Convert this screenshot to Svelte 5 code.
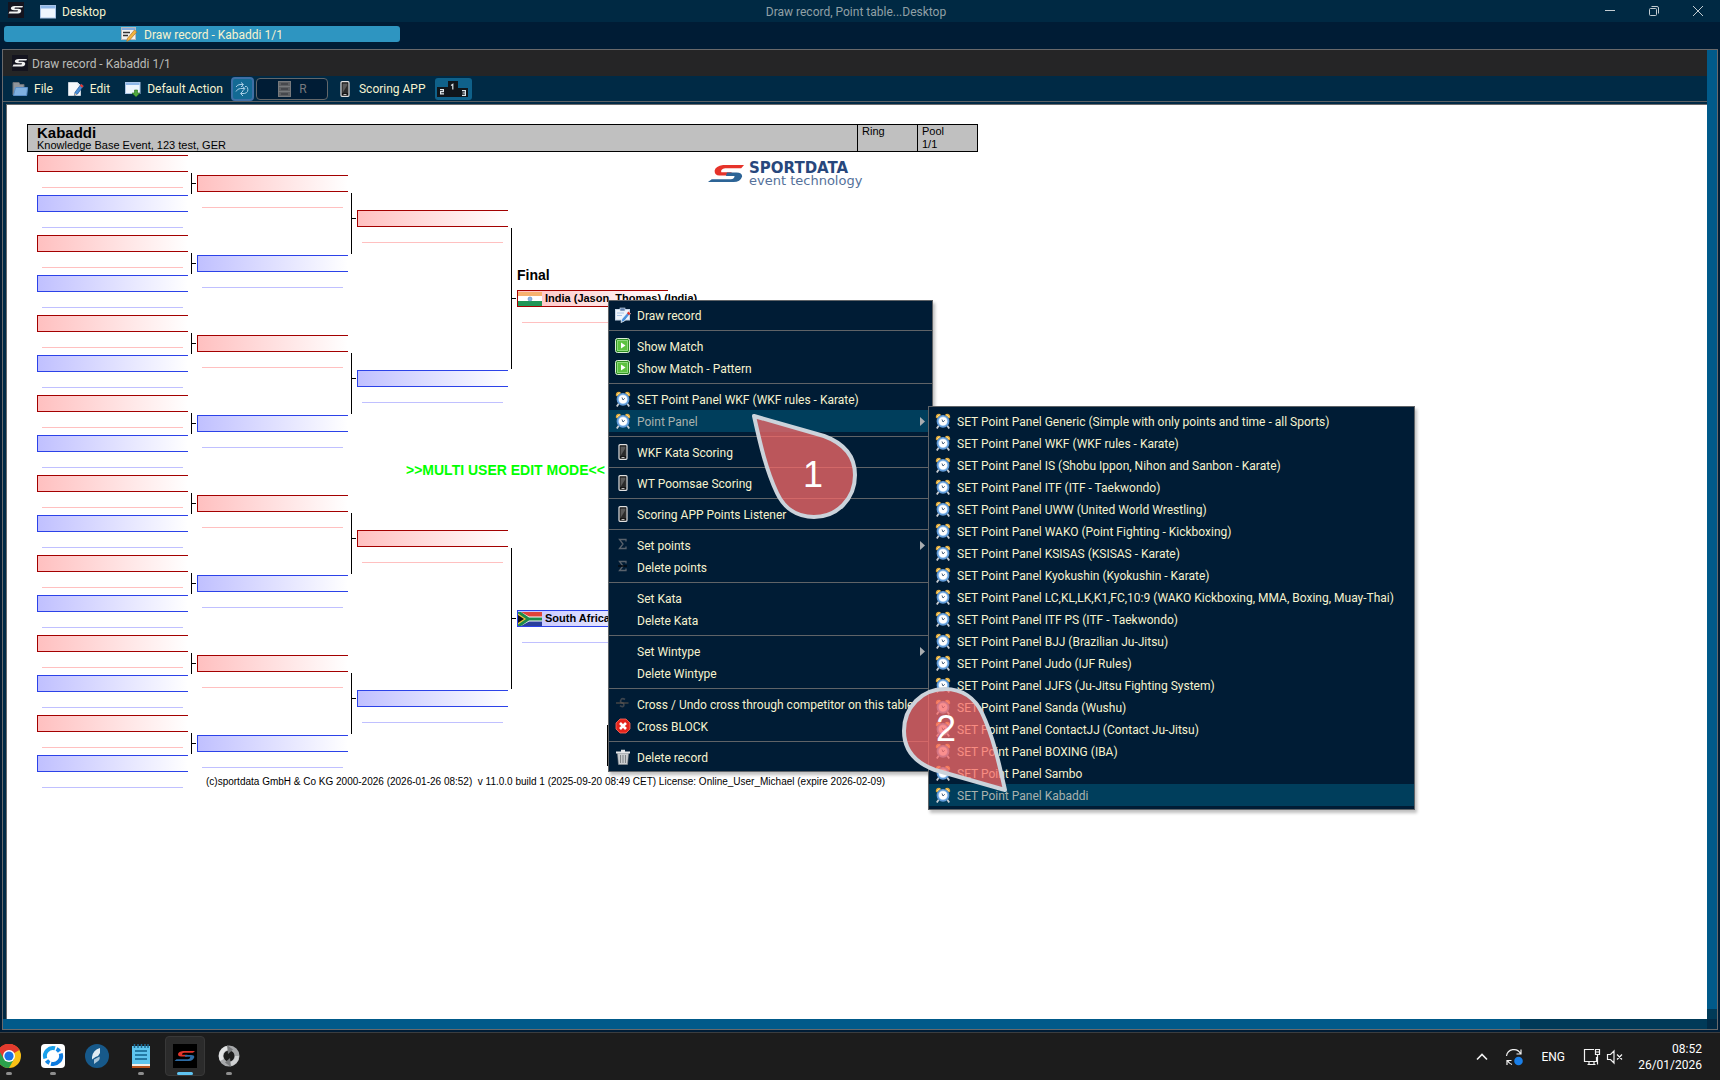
<script>
  const rounds = [
    { name: 'r1', pairs: [0, 1, 2, 3, 4, 5, 6, 7] },
    { name: 'r2', pairs: [0, 1, 2, 3] },
    { name: 'r3', pairs: [0, 1] }
  ];

  const groups = [
    [{ label: 'Draw record', icon: 'record' }],
    [{ label: 'Show Match', icon: 'play' }, { label: 'Show Match - Pattern', icon: 'play' }],
    [
      { label: 'SET Point Panel WKF (WKF rules - Karate)', icon: 'clock' },
      { label: 'Point Panel', icon: 'clock', sub: true, active: true }
    ],
    [{ label: 'WKF Kata Scoring', icon: 'phone' }],
    [{ label: 'WT Poomsae Scoring', icon: 'phone' }],
    [{ label: 'Scoring APP Points Listener', icon: 'phone' }],
    [{ label: 'Set points', icon: 'sigma', sub: true }, { label: 'Delete points', icon: 'sigmaCut' }],
    [{ label: 'Set Kata' }, { label: 'Delete Kata' }],
    [{ label: 'Set Wintype', sub: true }, { label: 'Delete Wintype' }],
    [
      { label: 'Cross / Undo cross through competitor on this table', icon: 'strike' },
      { label: 'Cross BLOCK', icon: 'block' }
    ],
    [{ label: 'Delete record', icon: 'trash' }]
  ];

  const panels = [
    'Generic (Simple with only points and time - all Sports)',
    'WKF (WKF rules - Karate)',
    'IS (Shobu Ippon, Nihon and Sanbon - Karate)',
    'ITF (ITF - Taekwondo)',
    'UWW (United World Wrestling)',
    'WAKO (Point Fighting - Kickboxing)',
    'KSISAS (KSISAS - Karate)',
    'Kyokushin (Kyokushin - Karate)',
    'LC,KL,LK,K1,FC,10:9 (WAKO Kickboxing, MMA, Boxing, Muay-Thai)',
    'ITF PS (ITF - Taekwondo)',
    'BJJ (Brazilian Ju-Jitsu)',
    'Judo (IJF Rules)',
    'JJFS (Ju-Jitsu Fighting System)',
    'Sanda (Wushu)',
    'ContactJJ (Contact Ju-Jitsu)',
    'BOXING (IBA)',
    'Sambo',
    'Kabaddi'
  ];
</script>

{#snippet icon(name)}
  <svg class="icon" viewBox="0 0 16 16" aria-hidden="true">
    {#if name === 'app'}
      <rect width="16" height="16" fill="#14141f" />
      <path d="M15 4H6.500Q3 4.200 2.800 6.500Q3 8.300 6 8.300h4l-.5 1.200H1.500l-1 2h9.500q3-.3 3.300-2.800Q13.200 7 10.500 6.800H6.500l.4-1.300h7.400z" fill="#f2f2f2" />
    {:else if name === 'window'}
      <rect x=".5" y="1.500" width="15" height="12.500" fill="#eef5fd" stroke="#a9c4e6" />
      <rect x="1" y="2" width="14" height="2.500" fill="#8fb7e8" />
    {:else if name === 'form'}
      <rect x=".5" y="1.500" width="14" height="12" fill="#f3f3f0" stroke="#b9b9b9" />
      <rect x="1" y="2" width="13" height="2" fill="#86ade0" />
      <path d="M2 6.500h7M2 9.500h5" stroke="#333" stroke-width="1.500" />
      <path d="M13.500 4l2.200 2-7 8-3 1.500.8-3.200z" fill="#f3b63f" stroke="#a9712a" stroke-width=".7" />
    {:else if name === 'folder'}
      <path d="M1 14V1.500h6l1 2h4v3h2" fill="#8f949a" stroke="#6b7177" />
      <path d="M3.500 6.500h12l-.8 8H1.500z" fill="#7fb0e0" stroke="#5a8fc8" />
    {:else if name === 'edit'}
      <path d="M.5 1.500h9l3 3v10h-12z" fill="#f7f9fb" stroke="#c9d3dc" />
      <path d="M9.500 1.500v3h3" fill="#dbe5ef" />
      <path d="M13.200 3l2.300 2-6 8-3.200 1.800.8-3.600z" fill="#4a90d9" stroke="#1c4f8f" stroke-width=".7" />
      <path d="M13.200 3l2.300 2-1.300 1.700-2.400-2z" fill="#e4372c" />
      <path d="M6.300 14.800l.7-2.600 1.800 1.300z" fill="#e9c79a" />
    {:else if name === 'default'}
      <rect x=".5" y="1.500" width="14.500" height="11" fill="#eef5fd" stroke="#a9c4e6" />
      <rect x="1" y="2" width="13.500" height="2" fill="#8fb7e8" />
      <path d="M9.500 9h3v3h2.500l-4 4-4-4h2.500z" fill="#4fa83e" stroke="#276b1d" stroke-width=".6" />
    {:else if name === 'phone'}
      <rect x="4" y=".7" width="8" height="14.600" rx="1" fill="#151515" stroke="#e0e0e0" stroke-width="1.200" />
      <rect x="5.500" y="2.500" width="5" height="9.500" fill="#5a5a5a" />
      <path d="M5.500 12L10.500 4v8z" fill="#2a2a2a" />
      <path d="M6.500 13.500h3" stroke="#bbb" />
    {:else if name === 'server'}
      <g fill="#5d5f62" stroke="#77797c"><rect x="1.500" y=".5" width="12" height="5" /><rect x="1.500" y="5.500" width="12" height="5" /><rect x="1.500" y="10.500" width="12" height="5" /></g>
      <path d="M4 3h7M4 8h7M4 13h7" stroke="#303338" />
    {:else if name === 'sync'}
      <g fill="none" stroke="#a9cfe6" stroke-width="1">
        <path d="M2 6q1.500-2.500 4-2.500h3M7 1.500l2.500 2L7 6" />
        <path d="M2 10.500q1.500-3 4.500-3h4M8.500 5.500L11 7.500 8.500 10" />
        <path d="M13.500 6.500q1.500 5-3 6H7M9 10l-2.500 2.500L9 15M11 5.500q2-.5 2.500 1" />
      </g>
    {:else if name === 'record'}
      <rect x=".5" y="2.500" width="14" height="10.500" fill="#eef5fb" stroke="#c5d6e8" />
      <rect x="5" y="1" width="5" height="3" fill="#5d7da8" stroke="#d8e4f0" stroke-width=".6" />
      <path d="M2 6h7M2 8.500h5" stroke="#a9c6e6" />
      <path d="M13.500 4.500l2 2-6 7.500-3.500 1.500.8-3.500z" fill="#4a90d9" stroke="#fff" stroke-width=".7" />
      <path d="M13.500 4.500l2 2-1.400 1.700-2.200-2z" fill="#e4372c" />
    {:else if name === 'play'}
      <rect x=".5" y=".5" width="14" height="14" rx="2" fill="#2f8f22" stroke="#d9efd4" />
      <rect x="2.500" y="2.500" width="10" height="10" fill="#5cc23f" stroke="#8ed97c" />
      <path d="M6 4.500L10.500 7.500 6 10.500z" fill="#fff" />
    {:else if name === 'clock'}
      <path d="M3.800 12.500L1.800 15.500M12.200 12.500l2 3" stroke="#c9cdd2" stroke-width="1.800" />
      <path d="M.8 4.500Q.6 1 4 .8q2 .2 2 1.400L2 5.500zM15.200 4.500Q15.400 1 12 .8q-2 .2-2 1.400L14 5.500z" fill="#e2aa3a" />
      <path d="M2 3.800l2.500-2M14 3.800l-2.500-2" stroke="#ffe08a" />
      <circle cx="8" cy="8.300" r="5.600" fill="#b5d6f5" stroke="#5f9ad8" stroke-width="1.600" />
      <circle cx="8" cy="8.300" r="4" fill="#fff" />
      <path d="M7 6.500L8 9l1.800-1.700" fill="none" stroke="#4c6480" />
    {:else if name === 'sigma' || name === 'sigmaCut'}
      <path d="M11 4.500V2.500H4.500L8 7 4.500 11.500H11V9.500" fill="none" stroke="#59626c" stroke-width="1.300" />
      {#if name === 'sigmaCut'}<path d="M3 7h9" stroke="#05080c" stroke-width="1.400" />{/if}
    {:else if name === 'strike'}
      <path d="M10 3.500Q8 2 6.500 3 5 4.500 6 6.500L8.500 7.500q1 2-.5 3-1.500.5-3-.8" fill="none" stroke="#3b444e" stroke-width="1.600" />
      <path d="M1 7h12.500" stroke="#66594d" />
    {:else if name === 'block'}
      <path d="M5 1h6l4 4v6l-4 4H5l-4-4V5z" fill="#e3241c" stroke="#ff6d5e" stroke-width=".8" />
      <path d="M5 5l6 6M11 5l-6 6" stroke="#fff" stroke-width="2.600" />
    {:else if name === 'trash'}
      <path d="M2.500 4.500h11l-1 11h-9z" fill="#c9cccf" stroke="#8c9093" stroke-width=".6" />
      <path d="M5.500 6v8M8 6v8M10.500 6v8" stroke="#7d8285" />
      <path d="M1 2.500h14v2H1zM6 .8h4v1.700H6z" fill="#e4e6e8" />
    {/if}
  </svg>
{/snippet}

{#snippet slot(side)}
  <div class="slot {side}"></div>
{/snippet}

<div class="screen">
  <header class="titlebar">
    <div class="brand">
      {@render icon('app')}
      <button class="plain desk">{@render icon('window')}Desktop</button>
    </div>
    <h1>Draw record, Point table...Desktop</h1>
    <div class="controls">
      <button aria-label="Minimize"><svg viewBox="0 0 12 12"><path d="M1 5.500h10" /></svg></button>
      <button aria-label="Restore"><svg viewBox="0 0 12 12"><rect x="1.500" y="3.500" width="7" height="7" rx="1" /><path d="M3.500 1.500h5.500q1.500 0 1.500 1.500v5.500" /></svg></button>
      <button aria-label="Close"><svg viewBox="0 0 12 12"><path d="M1 1l10 10M11 1L1 11" /></svg></button>
    </div>
  </header>

  <nav class="tabs"><button class="tab">{@render icon('form')}<span>Draw record - Kabaddi 1/1</span></button></nav>

  <main class="frame">
    <div class="inner">
      <div class="caption">{@render icon('app')}<span>Draw record - Kabaddi 1/1</span></div>
      <div class="toolbar">
        <button class="plain">{@render icon('folder')}File</button>
        <button class="plain">{@render icon('edit')}Edit</button>
        <button class="plain">{@render icon('default')}Default Action</button>
        <div class="cluster">
          <button class="sync" aria-label="Synchronize">{@render icon('sync')}</button>
          <button class="ring" disabled>{@render icon('server')}R</button>
        </div>
        <button class="plain app">{@render icon('phone')}Scoring APP</button>
        <button class="podium" aria-label="Podium">
          <svg viewBox="0 0 32 16" aria-hidden="true">
            <path d="M0 6h11V0h10v7h10v9H0z" fill="#10151a" />
            <g fill="none" stroke="#dfe6ea" stroke-width="1.200">
              <path d="M3 8.600h3.400v2H3.600v2.300H7" /><path d="M14 4.500l1.800-1.200v5.200" /><path d="M25 9.600h3.400v4.800H25M25.500 12h3" />
            </g>
          </svg>
        </button>
      </div>

      <section class="sheet">
        <div class="head">
          <div class="event"><h2>Kabaddi</h2><p>Knowledge Base Event, 123 test, GER</p></div>
          <div class="cell">Ring</div>
          <div class="cell"><span>Pool</span><span>1/1</span></div>
        </div>

        <div class="bracket">
          {#each rounds as round}
            <div class="round {round.name}">
              {#each round.pairs as pair (pair)}
                <div class="pair">{@render slot('red')}{@render slot('blue')}</div>
              {/each}
            </div>
          {/each}
          <div class="round final">
            <h3>Final</h3>
            <div class="slot red named">
              <svg class="flag" viewBox="0 0 24 14" aria-hidden="true">
                <rect width="24" height="5" fill="#f7b26f" /><rect y="4" width="24" height="6" fill="#fff" /><rect y="9" width="24" height="5" fill="#1f9556" />
                <circle cx="12" cy="7" r="2" fill="#8fb4de" stroke="#5584bd" stroke-width=".6" />
              </svg>
              <span>India (Jason, Thomas) (India)</span>
            </div>
            <div class="slot blue named">
              <svg class="flag" viewBox="0 0 24 14" aria-hidden="true">
                <rect width="24" height="14" fill="#fff" /><path d="M3 0h21v4.500H11z" fill="#e0443a" /><path d="M3 14h21V9.500H11z" fill="#2a3f9c" />
                <path d="M0 0h3l8 5.500h13v3H11L3 14H0z" fill="#1d8a4a" /><path d="M0 1.500L8 7l-8 5.500z" fill="#f3c53c" /><path d="M0 3l6 4-6 4z" fill="#111" />
              </svg>
              <span>South Africa</span>
            </div>
          </div>
          <svg class="logo-mark" viewBox="0 0 38 20" aria-hidden="true">
            <path d="M38 0H16Q8 1 7 6q0 5 5 5h12L25 7.500H14q-1-3 4-4h17z" fill="#e6332a" />
            <path d="M20 8h10q6 0 6 4-2 6-9 6H0l4-3h20q4-.6 4-3.500H19z" fill="#2d6496" />
          </svg>
          <div class="logo-text"><b>SPORTDATA</b><span>event technology</span></div>
          <div class="notice">&gt;&gt;MULTI USER EDIT MODE&lt;&lt;</div>
          <div class="winner"></div>
        </div>
        <p class="license">(c)sportdata GmbH &amp; Co KG 2000-2026 (2026-01-26 08:52) &nbsp;v 11.0.0 build 1 (2025-09-20 08:49 CET) License: Online_User_Michael (expire 2026-02-09)</p>
      </section>
      <div class="hscroll"><div class="hthumb"></div></div>
    </div>
    <div class="vscroll"><div class="vthumb"></div><div class="vtrack"></div></div>
  </main>

  <footer class="taskbar">
    <div class="apps">
      <button aria-label="Chrome" class="open"><svg viewBox="0 0 24 24"><circle cx="12" cy="12" r="12" fill="#fbc116" /><path d="M12 12L1.600 6A12 12 0 0 1 22.400 6z" fill="#e33b2e" /><path d="M1.600 6A12 12 0 0 0 12 24l5-9-5-3z" fill="#2ba24c" /><path d="M12 6h10.400A12 12 0 0 0 1.600 6L7 15z" fill="#e33b2e" /><circle cx="12" cy="12" r="6" fill="#fff" /><circle cx="12" cy="12" r="4.600" fill="#1a73e8" /></svg></button>
      <button aria-label="Remote" class="open"><svg viewBox="0 0 24 24"><rect width="24" height="24" rx="4" fill="#fff" /><g fill="none" stroke-width="4"><path d="M4.300 14.500A8 8 0 0 1 14 4.300" stroke="#19a0ea" /><path d="M19.700 9.500A8 8 0 0 1 10 19.700" stroke="#0d7be0" /><path d="M15.500 5A8 8 0 0 1 18.500 7.500M5.500 16.500a8 8 0 0 0 3 2.500" stroke="#1589e6" /></g></svg></button>
      <button aria-label="Quill"><svg viewBox="0 0 24 24"><circle cx="12" cy="12" r="12" fill="#17598a" /><path d="M7 13Q8 6 15 4v5q-1 3-4.500 4L7 15.500z" fill="#dfeaf2" /><path d="M9 20V15.500l5.500-3q1 3-2 5z" fill="#a9c4d8" /></svg></button>
      <button aria-label="Notepad" class="open"><svg viewBox="0 0 24 24"><rect x="3" y="2" width="18" height="20" fill="#5ec5ee" /><path d="M3 20h18v2H3z" fill="#f3efe8" /><path d="M3 22h18v2H3z" fill="#b9541d" /><path d="M5.500 0v4M9 0v4M12.500 0v4M16 0v4M19 0v4" stroke="#1c6a92" stroke-width="1.500" /><path d="M6 7h12M6 11h12M6 15h12" stroke="#10618c" stroke-width="1.600" /></svg></button>
      <button aria-label="Sportdata" class="open active"><svg viewBox="0 0 24 24"><rect width="24" height="24" fill="#000" /><path d="M22 7H10Q5.500 7.500 5 10q0 2.500 3 2.500h6l.5-1.800H9Q9 9 11 8.800h9z" fill="#e0342b" /><path d="M12 11h6q3.500 0 3.300 2.300Q20 16.800 16 17H1.500l2-1.800H15q2.300-.3 2.300-2.400H12z" fill="#2d6ca5" /></svg></button>
      <button aria-label="Updater" class="open"><svg viewBox="0 0 24 24"><circle cx="12" cy="12" r="8" fill="none" stroke="#a6a8aa" stroke-width="5" /><path d="M11 4a8 8 0 0 0-6 12" fill="none" stroke="#e2e3e4" stroke-width="4" /><path d="M20 12a8 8 0 0 1-7 8" fill="none" stroke="#cfd1d2" stroke-width="4" /><path d="M10 1l6 4.500-5 4.500zM14 23l-6-4.500 5-4.500z" fill="#77797b" /></svg></button>
    </div>
    <div class="tray">
      <button aria-label="Hidden icons"><svg viewBox="0 0 18 18"><path d="M4 11.500L9 6.500l5 5" stroke-width="1.600" /></svg></button>
      <button aria-label="Updates"><svg viewBox="0 0 18 18"><path d="M1.500 8A7.500 7.500 0 0 1 15.500 5.500M16 1.500v4.500h-4.500M7 16.500A7.500 7.500 0 0 1 2.500 12.500M2 17v-4.500h4.500" /><circle cx="13.500" cy="13" r="4.300" fill="#1a7fe8" stroke="none" /></svg></button>
      <button class="lang">ENG</button>
      <button class="net" aria-label="Network and volume">
        <svg viewBox="0 0 18 18"><path d="M11 1.500H1.500v12h12V9M4.500 16.500h8M6 13.500v3M11 14v2.500" /><path d="M12.500 1.500h4v5h-4zM12.500 4h4M14.500 6.500v10" /></svg>
        <svg viewBox="0 0 18 18"><path d="M1.500 6.500h3l3.500-3.500v12L4.500 11.500h-3zM11 6.500l5 5M16 6.500l-5 5" /></svg>
      </button>
      <div class="time"><span>08:52</span><span>26/01/2026</span></div>
    </div>
  </footer>

  <div class="menu context" role="menu">
    {#each groups as group, g}
      {#if g > 0}<hr />{/if}
      {#each group as item}
        <button role="menuitem" class:active={item.active}>
          {@render icon(item.icon)}<span>{item.label}</span>
          {#if item.sub}<svg class="arrow" viewBox="0 0 5 9" aria-hidden="true"><path d="M0 0l5 4.500L0 9z" fill="#a9adb0" /></svg>{/if}
        </button>
      {/each}
    {/each}
  </div>

  <div class="menu submenu" role="menu">
    {#each panels as panel}
      <button role="menuitem" class:active={panel === 'Kabaddi'}>{@render icon('clock')}<span>SET Point Panel {panel}</span></button>
    {/each}
  </div>

  <div class="pin one">
    <svg viewBox="0 0 108 108" aria-hidden="true"><path d="M3 3L73 23C92 30 104 43 104 62C104 86 86 104 63 104C46 104 33 95 26 80C15 57 9 30 3 3z" /></svg>
    <span>1</span>
  </div>
  <div class="pin two">
    <svg viewBox="0 0 108 108" aria-hidden="true"><path d="M105 105L35 85C16 78 4 65 4 46C4 22 22 4 45 4C62 4 75 13 82 28C93 51 99 78 105 105z" /></svg>
    <span>2</span>
  </div>
</div>

<style>
  :global(body) { margin: 0; background: #001c35; }
  :global(*) { box-sizing: border-box; }
  .screen { position: relative; min-height: 100vh; display: flex; flex-direction: column; overflow: hidden; background: #001c35; color: #f6f3cf; font: 12px/16px Roboto, "Noto Sans", sans-serif; }
  button { font: inherit; color: inherit; background: none; border: 0; padding: 0; margin: 0; }
  h1, h2, h3, p { margin: 0; font: inherit; }
  .icon { width: 16px; height: 16px; flex: none; display: block; }
  .plain { display: flex; align-items: center; gap: 6px; }

  .titlebar { height: 22px; flex: none; display: grid; grid-template-columns: 1fr auto 1fr; align-items: center; background: #002943; padding: 0 16px 0 8px; }
  .brand { display: flex; gap: 16px; }
  .titlebar h1, .desk, .tab span, .caption span, .menu span { padding-top: 2px; }
  .titlebar h1 { color: #91a0a6; }
  .controls { display: flex; justify-content: flex-end; gap: 32px; }
  .controls svg { display: block; width: 12px; height: 12px; fill: none; stroke: #c3ccd1; }

  .tabs { height: 27px; flex: none; padding: 4px; }
  .tab { width: 396px; max-width: 100%; height: 16px; display: flex; align-items: center; justify-content: center; gap: 7px; border-radius: 3px; background: #2e95c1; }

  .frame { flex: 1; display: flex; margin: 0 2px 2px; border: 1px solid #69696b; background: #002a45; }
  .inner { flex: 1; min-width: 0; display: flex; flex-direction: column; }
  .caption { height: 26px; flex: none; display: flex; align-items: center; gap: 4px; padding-left: 9px; background: #252526; color: #b9bbb8; }
  .toolbar { height: 26px; flex: none; display: flex; align-items: center; gap: 15px; padding-left: 9px; border-bottom: 1px solid #5c6063; }
  .cluster { display: flex; gap: 2px; margin-left: -7px; }
  .sync { width: 23px; height: 24px; display: grid; place-items: center; background: #136a94; border: 2px solid #3f6fa5; border-radius: 4px; }
  .ring { width: 72px; height: 22px; align-self: center; display: flex; align-items: center; justify-content: center; gap: 6px; background: #001c35; border: 1px solid #63676a; border-radius: 4px; color: #77797c; }
  .app { margin-left: -6px; }
  .podium { width: 37px; height: 22px; margin-left: -6px; display: grid; place-items: center; background: #0f618a; border-radius: 3px; }
  .podium svg { width: 32px; height: 16px; }

  .sheet { flex: 1; margin: 2px 0 0 3px; border: solid #69696b; border-width: 1px 0 0 1px; background: #fff; color: #000; font: 11px/13px "Liberation Sans", Arial, sans-serif; padding: 19px 20px 0; }
  .head { width: 951px; height: 28px; display: flex; border: 1px solid #000; background: #c0c0c0; }
  .event { flex: 1; padding-left: 9px; }
  .event h2 { font: bold 15px/16px "Liberation Sans", Arial, sans-serif; }
  .event p { line-height: 9px; }
  .cell { width: 60px; border-left: 1px solid #000; padding-left: 4px; display: flex; flex-direction: column; }

  .bracket { position: relative; display: flex; gap: 10px; padding: 3px 0 0 10px; }
  .round { width: 150px; flex: none; display: flex; flex-direction: column; }
  .r1 { gap: 23px; }
  .r2 { gap: 63px; padding-top: 20px; }
  .r3 { gap: 143px; padding-top: 55px; }
  .final { padding-top: 112px; }
  .pair { position: relative; display: flex; flex-direction: column; }
  .r1 .pair { gap: 23px; }
  .r2 .pair { gap: 63px; }
  .r3 .pair { gap: 143px; }
  .pair::after { content: ""; position: absolute; left: 154px; top: 18px; bottom: 18px; width: 1px; background: #000; }
  .slot { position: relative; height: 17px; width: 151px; border: 1px solid; border-right: 0; }
  .slot.red { border-color: #a30000; background: linear-gradient(90deg, #ffc0c0, #fff); }
  .slot.blue { border-color: #2c42e8; background: linear-gradient(90deg, #c0c0ff, #fff); }
  .slot::after { content: ""; position: absolute; left: 4px; right: 5px; top: 31px; height: 1px; background: #ffc0c0; }
  .slot.blue::after { background: #c0c0ff; }
  .round:not(.r1) .slot::before { content: ""; position: absolute; left: -6px; top: 7px; width: 4px; height: 1px; background: #000; }
  .final h3 { font: bold 14px/16px "Liberation Sans", Arial, sans-serif; margin-bottom: 7px; }
  .named { display: flex; align-items: center; gap: 3px; font-weight: bold; white-space: nowrap; }
  .named + .named { margin-top: 303px; }
  .flag { width: 24px; height: 14px; flex: none; }
  .logo-mark { position: absolute; left: 680px; top: 13px; width: 38px; height: 19px; }
  .logo-text { position: absolute; left: 722px; top: 10px; display: flex; flex-direction: column; gap: 1px; color: #27477c; font: 13px/12px "DejaVu Sans", sans-serif; white-space: nowrap; }
  .logo-text b { font-size: 15px; }
  .logo-text span { color: #54719a; }
  .notice { position: absolute; left: 379px; top: 310px; font-size: 14px; line-height: 16px; font-weight: bold; color: #00ff00; }
  .winner { position: absolute; left: 580px; top: 573px; width: 120px; height: 41px; border: 1px solid #000; }
  .license { padding-left: 179px; margin-top: 3px; font-size: 10px; }

  .hscroll { height: 10px; flex: none; background: #003a58; }
  .hthumb { height: 10px; width: 89%; background: #005a8a; }
  .vscroll { width: 10px; flex: none; display: flex; flex-direction: column; padding-bottom: 10px; }
  .vthumb { flex: 1; background: #005a8a; }
  .vtrack { height: 10px; background: #003a58; }

  .taskbar { height: 48px; flex: none; display: flex; justify-content: space-between; background: #1c1c1c; border-top: 1px solid #3a3d40; }
  .apps { display: flex; gap: 4px; margin-left: -11px; padding-top: 3px; }
  .apps button { position: relative; width: 40px; height: 40px; border-radius: 4px; display: grid; place-items: center; }
  .apps svg { width: 24px; height: 24px; }
  .apps .open::after { content: ""; position: absolute; bottom: 1px; left: 17px; width: 6px; height: 3px; border-radius: 2px; background: #8d8d8d; }
  .apps .active { background: #2b2b2b; border: 1px solid #383838; }
  .apps .active.open::after { left: 11px; bottom: 0; width: 16px; background: #5fc4f2; }
  .tray { display: flex; align-items: center; gap: 14px; padding-right: 18px; color: #fff; }
  .tray svg { display: block; width: 18px; height: 18px; fill: none; stroke: #f2f2f2; stroke-width: 1.200; }
  .lang { padding: 0 4px; }
  .net { display: flex; gap: 5px; }
  .time { display: flex; flex-direction: column; text-align: right; min-width: 64px; }

  .menu { position: absolute; display: flex; flex-direction: column; padding: 3px 0; background: #001c35; border: 1px solid #5f6367; box-shadow: 2px 3px 3px rgba(0, 0, 0, .25); }
  .context { left: 608px; top: 300px; width: 325px; }
  .submenu { left: 928px; top: 406px; width: 487px; }
  .menu button { position: relative; height: 22px; display: flex; align-items: center; gap: 6px; padding: 0 6px; text-align: left; white-space: nowrap; }
  .menu button.active { background: #003e5c; color: #a8b2ae; }
  .menu hr { width: 100%; height: 1px; margin: 4px 0; border: 0; background: #5f6367; }
  .arrow { position: absolute; right: 7px; width: 5px; height: 9px; }

  .pin { position: absolute; width: 108px; height: 108px; }
  .pin svg { position: absolute; inset: 0; fill: rgba(250, 105, 104, .75); stroke: #cbd3db; stroke-width: 4; stroke-linejoin: round; }
  .pin span { position: absolute; width: 40px; text-align: center; color: #fff; font: 36px/40px "Liberation Sans", Arial, sans-serif; }
  .one { left: 751px; top: 413px; }
  .one span { left: 42px; top: 42px; }
  .two { left: 900px; top: 685px; }
  .two span { left: 26px; top: 24px; }
</style>
